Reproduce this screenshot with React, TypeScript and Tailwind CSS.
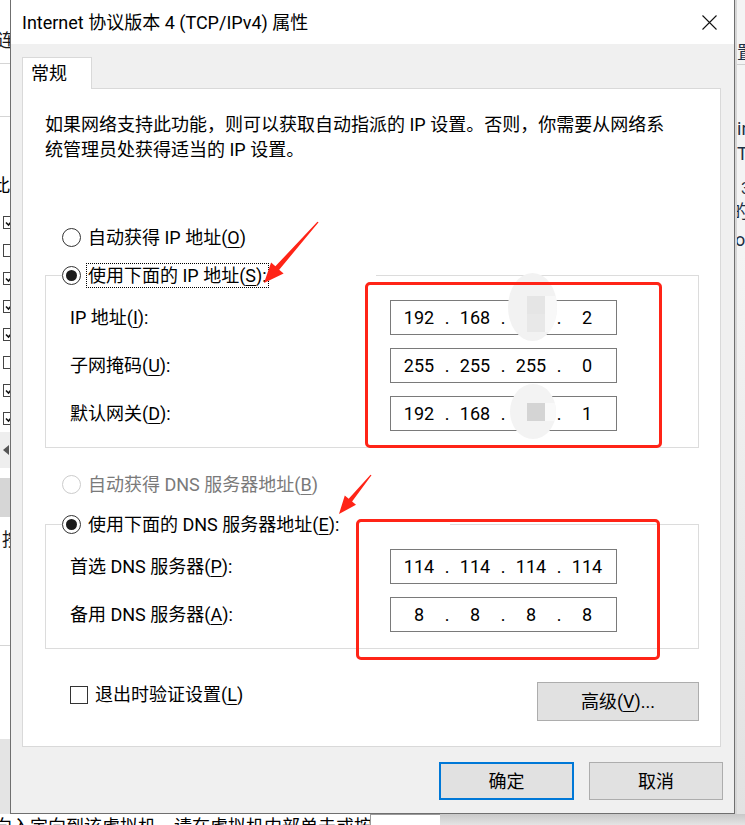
import { Fragment, type ReactNode } from "react";

const U = ({ c }: { c: string }) => <span className="underline underline-offset-[3px]">{c}</span>;

function Radio({ checked = false, disabled = false }: { checked?: boolean; disabled?: boolean }) {
  return (
    <span
      className={
        disabled
          ? "flex h-[19px] w-[19px] shrink-0 items-center justify-center rounded-full border border-[#cccccc] bg-white"
          : "flex h-[19px] w-[19px] shrink-0 items-center justify-center rounded-full border border-[#333333] bg-white"
      }
    >
      {checked && <span className="h-[11px] w-[11px] rounded-full bg-[#1b1b1b]" />}
    </span>
  );
}

function IpBox({ parts, mosaic }: { parts: string[]; mosaic?: "top" | "bottom" }) {
  return (
    <div className="relative flex h-[35px] w-[227px] shrink-0 items-center border border-[#7a7a7a] bg-white pl-[3px]">
      {parts.map((p, i) => (
        <Fragment key={i}>
          <span className="w-[50px] text-center">{p}</span>
          {i < 3 && <span className="w-[6px] text-center">.</span>}
        </Fragment>
      ))}
      {/* pixelated privacy blur over the third octet */}
      {mosaic === "top" && (
        <div className="absolute left-[117px] top-[-28px] h-[68px] w-[49px] overflow-hidden rounded-[50%] bg-[#f2f2f2]">
          <div className="absolute left-[19px] top-[23px] h-[18px] w-[18px] bg-[#e5e5e5]" />
          <div className="absolute left-[19px] top-[41px] h-[18px] w-[18px] bg-[#e8e8e8]" />
          <div className="absolute left-[37px] top-[23px] h-[36px] w-[12px] bg-[#f8f8f8]" />
        </div>
      )}
      {mosaic === "bottom" && (
        <div className="absolute left-[119px] top-[-13px] h-[55px] w-[46px] overflow-hidden rounded-[50%] bg-[#f3f3f3]">
          <div className="absolute left-[17px] top-[19px] h-[18px] w-[18px] bg-[#d4d4d4]" />
          <div className="absolute left-[35px] top-[19px] h-[18px] w-[11px] bg-[#f9f9f9]" />
        </div>
      )}
    </div>
  );
}

function Row({ label, parts, mosaic }: { label: ReactNode; parts: string[]; mosaic?: "top" | "bottom" }) {
  return (
    <div className="flex items-center">
      <span className="w-[320px] shrink-0">{label}</span>
      <IpBox parts={parts} mosaic={mosaic} />
    </div>
  );
}

function LeftStrip() {
  const boxes = [true, false, true, true, true, false, true, true];
  return (
    <div className="flex w-[10px] shrink-0 flex-col overflow-hidden bg-white">
      <div className="h-[63px] whitespace-nowrap pt-[28px] text-[#1a1a1a]">
        <span className="-ml-[3px] inline-block">连</span>
      </div>
      <div className="h-[53px] border-t border-[#d5d5d5]" />
      <div className="h-[92px] whitespace-nowrap border-t border-[#d5d5d5] pt-[56px]">
        <span className="-ml-[8px] inline-block">此</span>
      </div>
      {boxes.map((on, i) => (
        <div key={i} className="flex h-[28px] items-center">
          <span className="ml-[3px] flex h-[13px] w-[13px] shrink-0 items-center justify-center border border-[#444444] bg-white">
            {on && (
              <svg width="9" height="9" viewBox="0 0 9 9">
                <path d="M1 4.5 L3.5 7 L8 1.5" fill="none" stroke="#111" strokeWidth="1.6" />
              </svg>
            )}
          </span>
        </div>
      ))}
      <div className="flex h-[36px] items-center bg-[#eeeeee] pl-[3px]">
        <svg width="7" height="10" viewBox="0 0 7 10">
          <path d="M6 0 L0 5 L6 10 Z" fill="#555" />
        </svg>
      </div>
      <div className="h-[10px]" />
      <div className="h-[39px] bg-[#d6d6d6]" />
      <div className="h-[128px] whitespace-nowrap pt-[10px] text-[#1a1a1a]">
        <span className="ml-[2px] inline-block">按</span>
      </div>
      <div className="h-[94px] border-t border-[#d5d5d5]" />
      <div className="flex-1 bg-[#e4e4e4]" />
    </div>
  );
}

function RightStrip() {
  return (
    <div className="flex w-[10px] shrink-0 flex-col overflow-hidden whitespace-nowrap border-l-2 border-[#d6d6d6] bg-[#f4f4f4] text-[#1d2f45]">
      <div className="h-[64px] pt-[40px]">
        <span className="inline-block">置</span>
      </div>
      <div className="h-[52px] border-t border-[#d0d0d0]" />
      <div className="h-[25px]">in</div>
      <div className="h-[38px]">T</div>
      <div className="h-[20px] text-[16px] leading-[20px]">
        <span className="ml-[4px] inline-block">3</span>
      </div>
      <div className="h-[28px]">
        <span className="-ml-[6px] inline-block">的</span>
      </div>
      <div className="h-[25px]">
        <span className="-ml-[2px] inline-block">or</span>
      </div>
      <div className="flex-1 bg-gradient-to-b from-[#f4f4f4] to-[#e2e2e2]" />
    </div>
  );
}

function Annotations() {
  return (
    <>
      <div className="pointer-events-none absolute left-[365px] top-[282px] h-[166px] w-[297px] rounded-[5px] border-[3px] border-[#ff2417]" />
      <div className="pointer-events-none absolute left-[356px] top-[519px] h-[141px] w-[304px] rounded-[5px] border-[3px] border-[#ff2417]" />
      <svg className="pointer-events-none absolute left-0 top-0" width="745" height="825" viewBox="0 0 745 825">
        <polygon
          points="318.6,222.3 279.2,269.7 283.6,273.5 264,283 271.1,262.5 275.4,266.3 317.4,221.7"
          fill="#ff2417"
        />
        <polygon
          points="371.5,475.3 352.1,501.5 356,504.8 339,514 344.8,495.4 348.7,498.7 370.5,474.7"
          fill="#ff2417"
        />
      </svg>
    </>
  );
}

export default function App() {
  return (
    <div className="relative h-[825px] w-[745px] overflow-hidden bg-[#f0f0f0] font-['Segoe_UI',Roboto,'Noto_Sans_CJK_SC',sans-serif] text-[18px] leading-[25px] text-black">
      <div className="flex h-[814px]">
        <LeftStrip />

        <div className="flex w-[725px] shrink-0 flex-col border-x border-b border-[#6f6f6f]">
          {/* title bar */}
          <div className="flex h-[44px] shrink-0 items-center justify-between bg-white pl-[11px] pr-[17px]">
            <span>Internet 协议版本 4 (TCP/IPv4) 属性</span>
            <svg width="15" height="15" viewBox="0 0 15 15">
              <path d="M0.5 0.5 L14.5 14.5 M14.5 0.5 L0.5 14.5" stroke="#111" strokeWidth="1.1" />
            </svg>
          </div>

          <div className="flex flex-1 flex-col bg-[#f0f0f0] px-[11px] pb-[13px] pt-[13px]">
            <div className="relative z-10 -mb-px h-[32px] w-[70px] border border-b-0 border-[#d9d9d9] bg-white pl-[8px] pt-[3px]">
              常规
            </div>

            <div className="mr-[2px] flex flex-col border border-[#d9d9d9] bg-white pb-[25px] pl-[22px] pr-[21px] pt-[23px]">
              <p>
                如果网络支持此功能，则可以获取自动指派的 IP 设置。否则，你需要从网络系
                <br />
                统管理员处获得适当的 IP 设置。
              </p>

              <div className="ml-[17px] mt-[63px] flex h-[25px] items-center gap-[5px]">
                <Radio />
                <span className="border border-transparent px-[1px] leading-[23px]">
                  自动获得 IP 地址(<U c="O" />)
                </span>
              </div>

              <fieldset className="mt-[13px] border border-[#dcdcdc]">
                <legend className="ml-[16px] w-[314px] bg-white">
                  <div className="flex h-[25px] items-center gap-[5px]">
                    <Radio checked />
                    <span className="border border-dotted border-black px-[1px] leading-[23px]">
                      使用下面的 IP 地址(<U c="S" />):
                    </span>
                  </div>
                </legend>
                <div className="flex flex-col gap-[13px] px-[24px] pb-[16px] pt-[12px]">
                  <Row label={<>IP 地址(<U c="I" />):</>} parts={["192", "168", "", "2"]} mosaic="top" />
                  <Row label={<>子网掩码(<U c="U" />):</>} parts={["255", "255", "255", "0"]} />
                  <Row label={<>默认网关(<U c="D" />):</>} parts={["192", "168", "", "1"]} mosaic="bottom" />
                </div>
              </fieldset>

              <div className="ml-[17px] mt-[24px] flex h-[25px] items-center gap-[5px] text-[#7a7a7a]">
                <Radio disabled />
                <span className="border border-transparent px-[1px] leading-[23px]">
                  自动获得 DNS 服务器地址(<U c="B" />)
                </span>
              </div>

              <fieldset className="mt-[15px] border border-[#dcdcdc]">
                <legend className="ml-[16px] w-[388px] bg-white">
                  <div className="flex h-[25px] items-center gap-[5px]">
                    <Radio checked />
                    <span className="border border-transparent px-[1px] leading-[23px]">
                      使用下面的 DNS 服务器地址(<U c="E" />):
                    </span>
                  </div>
                </legend>
                <div className="flex flex-col gap-[13px] px-[24px] pb-[16px] pt-[12px]">
                  <Row label={<>首选 DNS 服务器(<U c="P" />):</>} parts={["114", "114", "114", "114"]} />
                  <Row label={<>备用 DNS 服务器(<U c="A" />):</>} parts={["8", "8", "8", "8"]} />
                </div>
              </fieldset>

              <div className="mt-[33px] flex items-start justify-between">
                <label className="ml-[25px] flex h-[25px] items-center gap-[7px]">
                  <span className="h-[18px] w-[18px] border border-[#333333] bg-white" />
                  <span>
                    退出时验证设置(<U c="L" />)
                  </span>
                </label>
                <button className="h-[39px] w-[162px] border border-[#adadad] bg-[#e1e1e1]">
                  高级(<U c="V" />)...
                </button>
              </div>
            </div>

            <div className="mt-[15px] flex justify-end gap-[15px]">
              <button className="h-[38px] w-[135px] border-2 border-[#0078d7] bg-[#e1e1e1]">确定</button>
              <button className="h-[38px] w-[134px] border border-[#adadad] bg-[#e1e1e1]">取消</button>
            </div>
          </div>
        </div>

        <RightStrip />
      </div>

      {/* window behind the dialog, peeking out at the bottom */}
      <div className="flex h-[11px] overflow-hidden whitespace-nowrap">
        <div className="w-[370px] bg-white">
          <span className="-ml-[6px] -mt-[2px] inline-block">向入定向到该虚拟机，请在虚拟机内部单击或按</span>
        </div>
        <div className="w-[70px] border-l border-t border-[#9a9a9a] bg-white" />
        <div className="flex-1 bg-gradient-to-b from-[#c8c8c8] to-[#e4e4e4]" />
      </div>

      <Annotations />
    </div>
  );
}
